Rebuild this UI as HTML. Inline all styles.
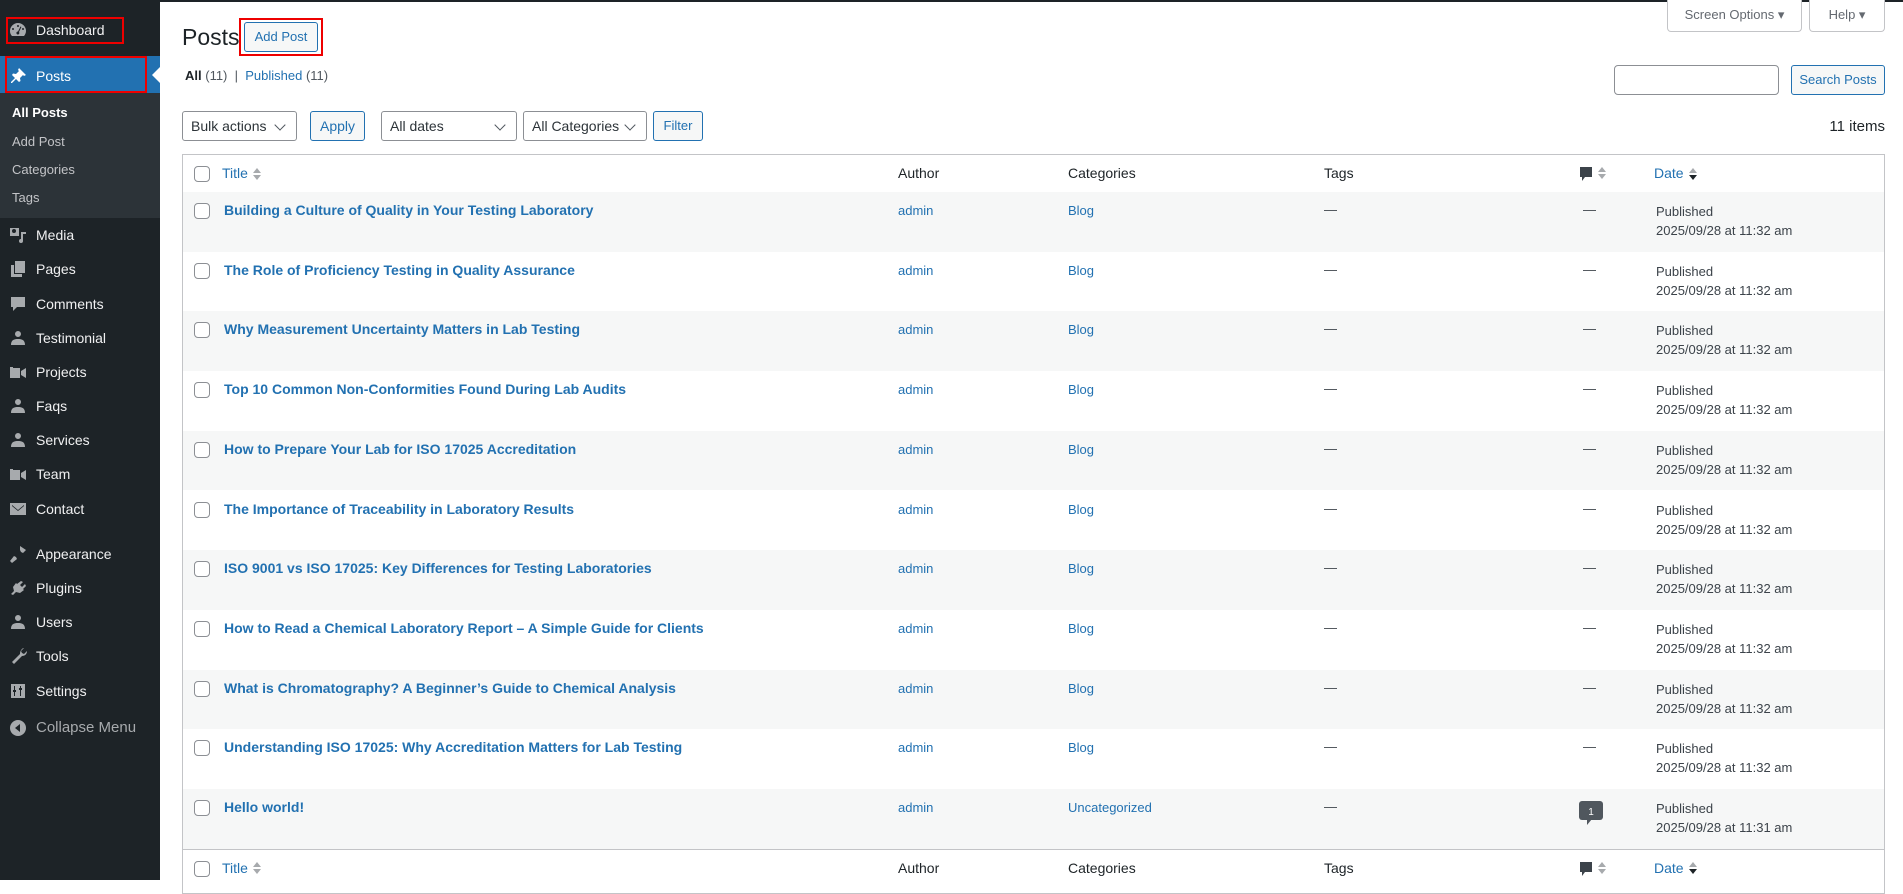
<!DOCTYPE html>
<html><head><meta charset="utf-8"><style>
*{box-sizing:border-box;margin:0;padding:0}
body{width:1903px;height:880px;overflow:hidden;background:#fff;font-family:"Liberation Sans",Arial,sans-serif;font-size:13px;color:#3c434a;position:relative}
.abs{position:absolute}
#side{left:0;top:0;width:160px;height:880px;background:#1d2327}
.mi{position:absolute;left:0;width:160px;color:#f0f0f1;font-size:14px;line-height:20px}
.mi .t{position:absolute;left:36px;top:-10px;white-space:nowrap}
.mi svg{position:absolute;left:8px;top:-10px}
.sub{position:absolute;left:12px;color:#c3c4c7;font-size:13px;line-height:18px;margin-top:-9px}
.btn{position:absolute;border:1px solid #2271b1;color:#2271b1;background:#f6f7f7;border-radius:3px;font-size:13px;text-align:center}
.sel{position:absolute;border:1px solid #8c8f94;background:#fff;border-radius:3px;font-size:14px;color:#2c3338;padding-left:8px}
.sel:after{content:"";position:absolute;right:12px;top:9px;width:7px;height:7px;border-right:1.6px solid #50575e;border-bottom:1.6px solid #50575e;transform:rotate(45deg)}
#tbl{left:182px;top:154px;width:1703px;height:740px;border:1px solid #c3c4c7;background:#fff;overflow:hidden}
.hd{position:absolute;left:0;right:0;height:38px;border-bottom:1px solid #c3c4c7;background:#fff;font-size:14px;color:#1d2327}
.hd span,.row span{position:absolute;white-space:nowrap}
.row{position:absolute;left:0;right:0;height:59.7px;font-size:13px}
.row.o{background:#f6f7f7}
.cb{position:absolute;left:11px;width:16px;height:16px;border:1px solid #8c8f94;border-radius:4px;background:#fff}
a,.lk{color:#2271b1;text-decoration:none}
.sa{display:inline-block;vertical-align:middle;margin-left:5px;width:8px;height:13px;position:relative}
.sa:before{content:"";position:absolute;left:0;top:0;border:4px solid transparent;border-bottom:5px solid #a7aaad;border-top:0}
.sa:after{content:"";position:absolute;left:0;top:7px;border:4px solid transparent;border-top:5px solid #a7aaad;border-bottom:0}
.sa.d:after{border-top-color:#1d2327}
.red{position:absolute;border:2px solid #e00}
</style></head><body>
<div id="side" class="abs">
  <div class="abs" style="left:0;top:56px;width:160px;height:37px;background:#2271b1"></div>
  <div class="abs" style="left:152px;top:67px;width:0;height:0;border:8px solid transparent;border-right-color:#fff;border-left:0"></div>
  <div class="abs" style="left:0;top:93px;width:160px;height:125px;background:#2c3338"></div>
  <div class="mi" style="top:30px"><svg width="20" height="20" viewBox="0 0 20 20"><path fill="#a7aaad" d="M10 3a8 8 0 0 0-8 8c0 2 .7 3.8 2 5h12a8 8 0 0 0 2-5 8 8 0 0 0-8-8zm0 2a1 1 0 1 1 0 2 1 1 0 0 1 0-2zM5 8a1 1 0 1 1 0 2 1 1 0 0 1 0-2zm10 0a1 1 0 1 1 0 2 1 1 0 0 1 0-2zm-2.5-1.5.9.5L11 12a1.5 1.5 0 1 1-1-.5z"/></svg><span class="t">Dashboard</span></div>
  <div class="mi" style="top:76px"><svg width="20" height="20" viewBox="0 0 20 20"><path fill="#fff" d="M11 2l7 7-2 1-1-1-3 3 .5 3-1.5 1-3-3-4 4H3v-1l4-4-3-3 1-1.5 3 .5 3-3-1-1z"/></svg><span class="t" style="color:#fff">Posts</span></div>
  <div class="sub" style="top:113px;color:#fff;font-weight:bold">All Posts</div>
  <div class="sub" style="top:142px">Add Post</div>
  <div class="sub" style="top:170px">Categories</div>
  <div class="sub" style="top:198px">Tags</div>
  <div class="mi" style="top:235px"><svg width="20" height="20" viewBox="0 0 20 20"><path fill="#a7aaad" d="M2 3h9v8H2zm4 1a2 2 0 1 0 0 4 2 2 0 0 0 0-4zm7 3h5v2h-3v7a2 2 0 1 1-2-2z"/></svg><span class="t">Media</span></div>
  <div class="mi" style="top:269px"><svg width="20" height="20" viewBox="0 0 20 20"><path fill="#a7aaad" d="M7 2h10v12H7zM3 6h3v9h8v3H3z"/></svg><span class="t">Pages</span></div>
  <div class="mi" style="top:304px"><svg width="20" height="20" viewBox="0 0 20 20"><path fill="#a7aaad" d="M3 3h14v10H9l-4 4v-4H3z"/></svg><span class="t">Comments</span></div>
  <div class="mi" style="top:338px"><svg width="20" height="20" viewBox="0 0 20 20"><path fill="#a7aaad" d="M10 3a3 3 0 1 1 0 6 3 3 0 0 1 0-6zM3 17c0-5 3-6 7-6s7 1 7 6z"/></svg><span class="t">Testimonial</span></div>
  <div class="mi" style="top:372px"><svg width="20" height="20" viewBox="0 0 20 20"><path fill="#a7aaad" d="M2 5h3v1h7v10H2zm11 4 5-3v10l-5-3z"/></svg><span class="t">Projects</span></div>
  <div class="mi" style="top:406px"><svg width="20" height="20" viewBox="0 0 20 20"><path fill="#a7aaad" d="M10 3a3 3 0 1 1 0 6 3 3 0 0 1 0-6zM3 17c0-5 3-6 7-6s7 1 7 6z"/></svg><span class="t">Faqs</span></div>
  <div class="mi" style="top:440px"><svg width="20" height="20" viewBox="0 0 20 20"><path fill="#a7aaad" d="M10 3a3 3 0 1 1 0 6 3 3 0 0 1 0-6zM3 17c0-5 3-6 7-6s7 1 7 6z"/></svg><span class="t">Services</span></div>
  <div class="mi" style="top:474px"><svg width="20" height="20" viewBox="0 0 20 20"><path fill="#a7aaad" d="M2 5h3v1h7v10H2zm11 4 5-3v10l-5-3z"/></svg><span class="t">Team</span></div>
  <div class="mi" style="top:509px"><svg width="20" height="20" viewBox="0 0 20 20"><path fill="#a7aaad" d="M2 4h16v12H2zm2 2v1l6 5 6-5V6l-6 5z"/></svg><span class="t">Contact</span></div>
  <div class="mi" style="top:554px"><svg width="20" height="20" viewBox="0 0 20 20"><path fill="#a7aaad" d="M12 2l6 4-3 3-2-1-5 5 1 2-5 4-2-2 4-5 2 1 5-5-1-2z"/></svg><span class="t">Appearance</span></div>
  <div class="mi" style="top:588px"><svg width="20" height="20" viewBox="0 0 20 20"><path fill="#a7aaad" d="M13 3l2 1-3 3 2 2 3-3 1 2-3 3 1 1-4 3-4-1-3 3-2-1 3-3-1-4 3-4 1 1z"/></svg><span class="t">Plugins</span></div>
  <div class="mi" style="top:622px"><svg width="20" height="20" viewBox="0 0 20 20"><path fill="#a7aaad" d="M10 3a3 3 0 1 1 0 6 3 3 0 0 1 0-6zM3 17c0-5 3-6 7-6s7 1 7 6z"/></svg><span class="t">Users</span></div>
  <div class="mi" style="top:656px"><svg width="20" height="20" viewBox="0 0 20 20"><path fill="#a7aaad" d="M16 2l-3 3 1 2 2 1 3-3c0 3-2 5-5 5l-8 8-2-2 8-8c0-3 2-6 4-6z"/></svg><span class="t">Tools</span></div>
  <div class="mi" style="top:691px"><svg width="20" height="20" viewBox="0 0 20 20"><path fill="#a7aaad" d="M3 3h14v14H3zm3 2v4H5v2h1v4h1v-4h1V9H7V5zm6 0v2h-1v2h1v6h1V9h1V7h-1V5z"/></svg><span class="t">Settings</span></div>
  <div class="mi" style="top:728px;color:#a7aaad"><svg width="20" height="20" viewBox="0 0 20 20"><circle cx="10" cy="10" r="8" fill="#a7aaad"/><path fill="#1d2327" d="M12 6v8l-5-4z"/></svg><span class="t" style="font-size:15px">Collapse Menu</span></div>
  <div class="red" style="left:6px;top:17px;width:118px;height:27px"></div>
  <div class="red" style="left:5px;top:56px;width:142px;height:37px"></div>
</div>
<div class="abs" style="left:160px;top:0;right:0;height:2px;background:#1d2327"></div>
<div class="abs" style="left:182px;top:22px;font-size:23px;color:#1d2327;line-height:30px">Posts</div>
<div class="btn" style="left:244px;top:22px;width:74px;height:30px;line-height:28px">Add Post</div>
<div class="red" style="left:239px;top:18px;width:84px;height:38px"></div>
<div class="abs" style="left:185px;top:67px;font-size:13px;line-height:18px;color:#50575e"><b style="color:#1d2327;font-weight:600">All</b> (11) &nbsp;|&nbsp; <span class="lk">Published</span> (11)</div>
<div class="abs" style="left:1667px;top:0;width:135px;height:32px;border:1px solid #c3c4c7;border-top:0;border-radius:0 0 4px 4px;background:#fff;color:#646970;line-height:30px;text-align:center">Screen Options ▾</div>
<div class="abs" style="left:1809px;top:0;width:76px;height:32px;border:1px solid #c3c4c7;border-top:0;border-radius:0 0 4px 4px;background:#fff;color:#646970;line-height:30px;text-align:center">Help ▾</div>
<div class="abs" style="left:1614px;top:65px;width:165px;height:30px;border:1px solid #8c8f94;border-radius:4px;background:#fff"></div>
<div class="btn" style="left:1791px;top:65px;width:94px;height:30px;line-height:28px">Search Posts</div>
<div class="sel" style="left:182px;top:111px;width:115px;height:30px;line-height:28px">Bulk actions</div>
<div class="btn" style="left:310px;top:111px;width:55px;height:30px;line-height:28px;font-size:14px">Apply</div>
<div class="sel" style="left:381px;top:111px;width:136px;height:30px;line-height:28px">All dates</div>
<div class="sel" style="left:523px;top:111px;width:124px;height:30px;line-height:28px">All Categories</div>
<div class="btn" style="left:653px;top:111px;width:50px;height:30px;line-height:28px">Filter</div>
<div class="abs" style="right:18px;top:118px;font-size:15px;color:#1d2327">11 items</div>
<div id="tbl" class="abs">
  <div class="hd" style="top:0">
    <div class="cb" style="top:11px"></div>
    <span style="left:39px;top:10px"><a>Title</a><i class="sa"></i></span>
    <span style="left:715px;top:10px">Author</span>
    <span style="left:885px;top:10px">Categories</span>
    <span style="left:1141px;top:10px">Tags</span>
    <span style="left:1396px;top:11px"><svg width="14" height="16" viewBox="0 0 14 16"><path fill="#3c434a" d="M1 1h12v10H6l-3 4v-4H1z"/></svg><i class="sa" style="vertical-align:top;margin-top:1px"></i></span>
    <span style="left:1471px;top:10px"><a>Date</a><i class="sa d"></i></span>
  </div>
  <div id="rows"></div>
</div>
<script>
(function(){
var t=["Building a Culture of Quality in Your Testing Laboratory","The Role of Proficiency Testing in Quality Assurance","Why Measurement Uncertainty Matters in Lab Testing","Top 10 Common Non-Conformities Found During Lab Audits","How to Prepare Your Lab for ISO 17025 Accreditation","The Importance of Traceability in Laboratory Results","ISO 9001 vs ISO 17025: Key Differences for Testing Laboratories","How to Read a Chemical Laboratory Report – A Simple Guide for Clients","What is Chromatography? A Beginner’s Guide to Chemical Analysis","Understanding ISO 17025: Why Accreditation Matters for Lab Testing","Hello world!"];
var h="";
for(var i=0;i<11;i++){var y=37+i*59.7;var last=(i==10);
h+='<div class="row'+(i%2==0?' o':'')+'" style="top:'+y+'px"><div class="cb" style="top:11px"></div>'+
'<span style="left:41px;top:10px;font-size:14px;font-weight:bold;color:#2271b1">'+t[i]+'</span>'+
'<span class="lk" style="left:715px;top:11px">admin</span>'+
'<span class="lk" style="left:885px;top:11px">'+(last?'Uncategorized':'Blog')+'</span>'+
'<span style="left:1141px;top:10px">—</span>'+
(last?'<span style="left:1396px;top:12px"><svg width="24" height="25" viewBox="0 0 24 25"><rect x="0" y="0" width="24" height="19" rx="3" fill="#50575e"/><path fill="#50575e" d="M8 18h5l-5 6z"/><text x="12" y="14" font-size="10" fill="#fff" text-anchor="middle" font-family="Liberation Sans">1</text></svg></span>':'<span style="left:1400px;top:10px">—</span>')+
'<span style="left:1473px;top:10px;line-height:19px">Published<br>2025/09/28 at 11:3'+(last?'1':'2')+' am</span></div>';}
h+='<div class="hd" style="top:'+(37+11*59.7)+'px;border-top:1px solid #c3c4c7;border-bottom:0"><div class="cb" style="top:11px"></div><span style="left:39px;top:10px"><a>Title</a><i class="sa"></i></span><span style="left:715px;top:10px">Author</span><span style="left:885px;top:10px">Categories</span><span style="left:1141px;top:10px">Tags</span><span style="left:1396px;top:11px"><svg width="14" height="16" viewBox="0 0 14 16"><path fill="#3c434a" d="M1 1h12v10H6l-3 4v-4H1z"/></svg><i class="sa" style="vertical-align:top;margin-top:1px"></i></span><span style="left:1471px;top:10px"><a>Date</a><i class="sa d"></i></span></div>';
document.getElementById("rows").innerHTML=h;
})();
</script>
</body></html>
